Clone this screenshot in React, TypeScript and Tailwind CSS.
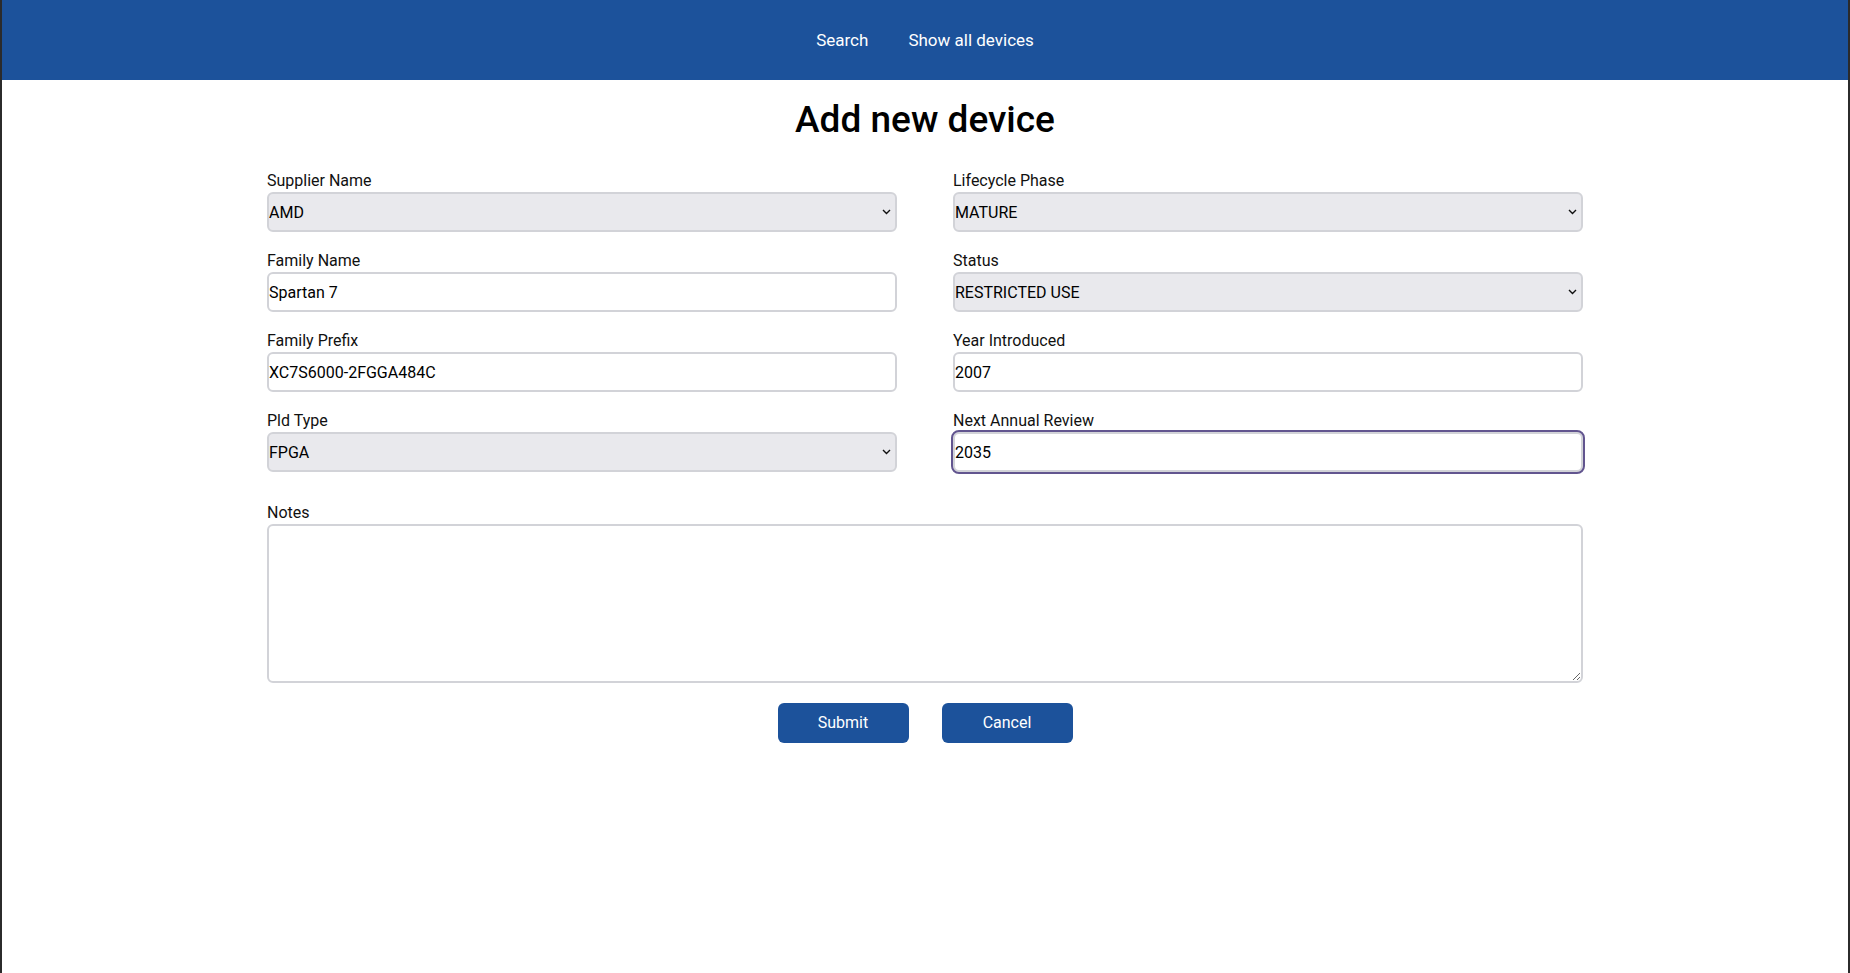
import { useState } from 'react'

const fieldClass =
  'block w-full h-[40px] px-0 border-2 border-[#d2d3d8] rounded-[6px] text-[16px] text-black outline-none'

interface FieldProps {
  label: string
  children: React.ReactNode
}

function Field({ label, children }: FieldProps) {
  return (
    <div>
      <label className="block text-[16px] leading-[19px] text-[#111] mb-[2px]">{label}</label>
      {children}
    </div>
  )
}

interface SelectProps {
  value: string
  onChange: (v: string) => void
  options: string[]
}

function Select({ value, onChange, options }: SelectProps) {
  return (
    <div className="relative">
      <select
        value={value}
        onChange={(e) => onChange(e.target.value)}
        className={`${fieldClass} appearance-none bg-[#e9e9ed] pt-[2px] pr-[24px]`}
      >
        {options.map((o) => (
          <option key={o}>{o}</option>
        ))}
      </select>
      {/* chevron */}
      <svg
        className="pointer-events-none absolute right-[6px] top-1/2 -translate-y-1/2"
        width="9"
        height="6"
        viewBox="0 0 9 6"
        fill="none"
      >
        <path d="M1 1l3.5 3.5L8 1" stroke="#111" strokeWidth="1.4" />
      </svg>
    </div>
  )
}

export default function App() {
  const [supplier, setSupplier] = useState('AMD')
  const [phase, setPhase] = useState('MATURE')
  const [familyName, setFamilyName] = useState('Spartan 7')
  const [status, setStatus] = useState('RESTRICTED USE')
  const [prefix, setPrefix] = useState('XC7S6000-2FGGA484C')
  const [year, setYear] = useState('2007')
  const [pldType, setPldType] = useState('FPGA')
  const [review, setReview] = useState('2035')
  const [notes, setNotes] = useState('')

  return (
    <div className="min-h-screen bg-white border-x-2 border-[#2b2b2b] font-['Roboto','Liberation_Sans',sans-serif]">
      {/* Top nav */}
      <header className="h-[80px] bg-[#1c529b] flex items-center justify-center gap-[40px] text-white text-[17px]">
        <a href="#" className="leading-[20px]">Search</a>
        <a href="#" className="leading-[20px]">Show all devices</a>
      </header>

      <h1 className="mt-[18px] text-center text-[37px] leading-[44px] font-medium text-black">
        Add new device
      </h1>

      <form className="w-[1316px] mx-auto mt-[29px]" onSubmit={(e) => e.preventDefault()}>
        <div className="grid grid-cols-2 gap-x-[56px] gap-y-[19px]">
          <Field label="Supplier Name">
            <Select value={supplier} onChange={setSupplier} options={['AMD', 'Intel', 'Lattice', 'Microchip']} />
          </Field>
          <Field label="Lifecycle Phase">
            <Select value={phase} onChange={setPhase} options={['NEW', 'MATURE', 'END OF LIFE']} />
          </Field>

          <Field label="Family Name">
            <input
              type="text"
              value={familyName}
              onChange={(e) => setFamilyName(e.target.value)}
              className={`${fieldClass} bg-white`}
            />
          </Field>
          <Field label="Status">
            <Select
              value={status}
              onChange={setStatus}
              options={['PREFERRED', 'RESTRICTED USE', 'NOT RECOMMENDED']}
            />
          </Field>

          <Field label="Family Prefix">
            <input
              type="text"
              value={prefix}
              onChange={(e) => setPrefix(e.target.value)}
              className={`${fieldClass} bg-white`}
            />
          </Field>
          <Field label="Year Introduced">
            <input
              type="text"
              value={year}
              onChange={(e) => setYear(e.target.value)}
              className={`${fieldClass} bg-white`}
            />
          </Field>

          <Field label="Pld Type">
            <Select value={pldType} onChange={setPldType} options={['FPGA', 'CPLD', 'SoC']} />
          </Field>
          <Field label="Next Annual Review">
            <input
              type="text"
              value={review}
              onChange={(e) => setReview(e.target.value)}
              className={`${fieldClass} bg-white outline-2 outline-solid outline-[#62558f] outline-offset-0`}
            />
          </Field>
        </div>

        <div className="mt-[31px]">
          <Field label="Notes">
            <textarea
              value={notes}
              onChange={(e) => setNotes(e.target.value)}
              className="block w-full h-[159px] px-0 border-2 border-[#d2d3d8] rounded-[6px] text-[16px] bg-white outline-none"
            />
          </Field>
        </div>

        <div className="mt-[20px] flex justify-center gap-[33px]">
          <button
            type="submit"
            className="w-[131px] h-[40px] rounded-[6px] bg-[#1c529b] text-white text-[16px]"
          >
            Submit
          </button>
          <button
            type="button"
            className="w-[131px] h-[40px] rounded-[6px] bg-[#1c529b] text-white text-[16px]"
          >
            Cancel
          </button>
        </div>
      </form>
    </div>
  )
}
